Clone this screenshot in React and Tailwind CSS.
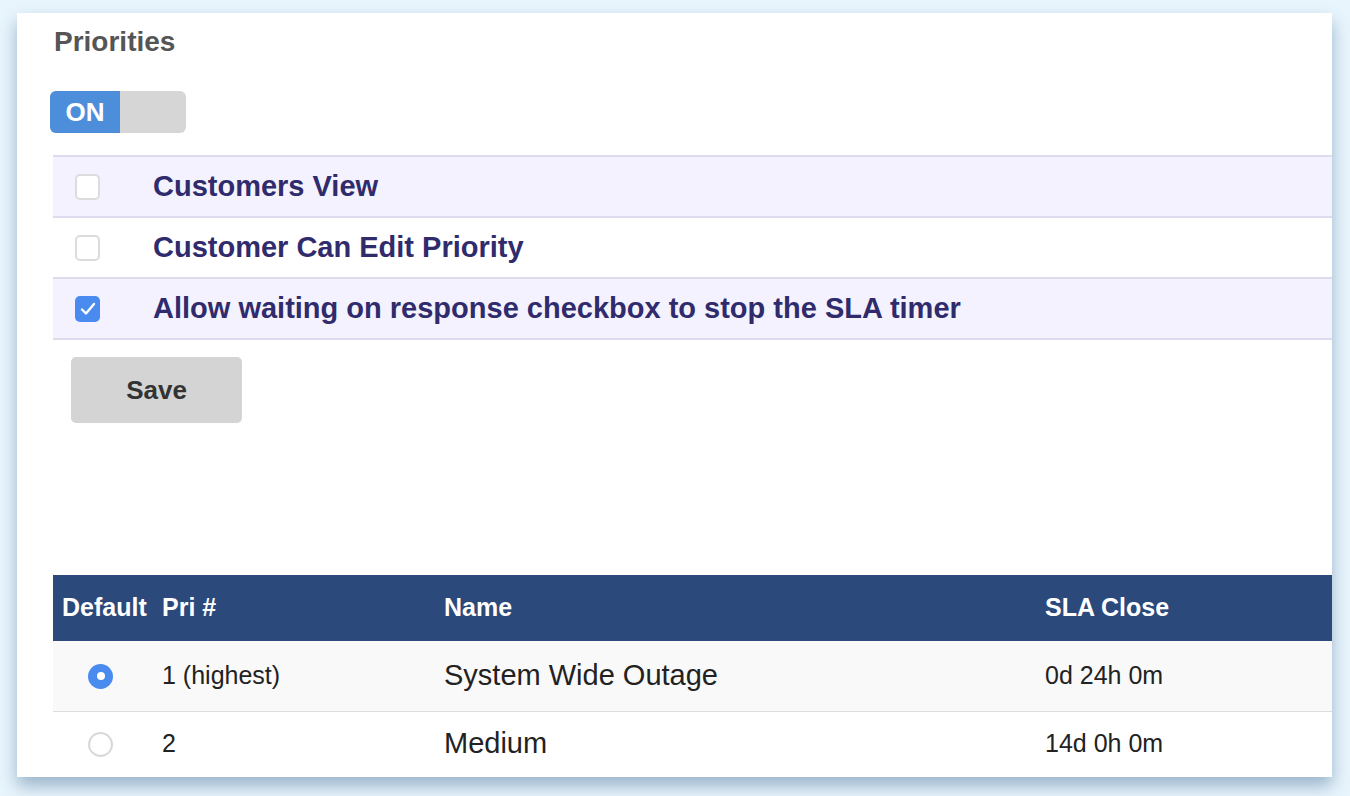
import React, { useState } from 'react';

const options = [
    { label: 'Customers View', checked: false, shaded: true },
    { label: 'Customer Can Edit Priority', checked: false, shaded: false },
    { label: 'Allow waiting on response checkbox to stop the SLA timer', checked: true, shaded: true },
];

const priorities = [
    { pri: '1 (highest)', name: 'System Wide Outage', sla: '0d 24h 0m', isDefault: true },
    { pri: '2', name: 'Medium', sla: '14d 0h 0m', isDefault: false },
];

const Checkbox = ({ checked, onChange }) => (
    <button
        onClick={onChange}
        className={`w-[25px] h-[26px] rounded-[5px] flex items-center justify-center ${
            checked ? 'bg-[#4a8bef]' : 'bg-white border-2 border-[#dcdcdc]'
        }`}
    >
        {checked && (
            <svg width="18" height="16" viewBox="0 0 18 16" fill="none">
                <path d="M3 8.5 L7 12.5 L15 3" stroke="white" strokeWidth="2.4" strokeLinecap="round" strokeLinejoin="round" />
            </svg>
        )}
    </button>
);

const Radio = ({ checked }) =>
    checked ? (
        <div className="w-[25px] h-[25px] rounded-full bg-[#4a8bef] flex items-center justify-center">
            <div className="w-[8px] h-[8px] rounded-full bg-white" />
        </div>
    ) : (
        <div className="w-[25px] h-[25px] rounded-full bg-white border-2 border-[#d8d8d8]" />
    );

const App = () => {
    const [enabled, setEnabled] = useState(true);
    const [checks, setChecks] = useState(options.map((o) => o.checked));

    return (
        <div className="min-h-screen bg-[#e8f5fd] pt-[13px] pl-[17px] pr-[18px] font-['Liberation_Sans',Arial,sans-serif]">
            <div className="bg-white h-[764px] flex flex-col pl-[36px] pt-[15px] shadow-[0_9px_16px_rgba(60,100,140,0.45)]">
                <h1 className="shrink-0 text-[28px] leading-[28px] font-bold text-[#555] ml-[1px]">Priorities</h1>

                {/* on/off switch */}
                <button
                    onClick={() => setEnabled(!enabled)}
                    className="shrink-0 mt-[35px] -ml-[3px] w-[136px] h-[42px] rounded-[6px] bg-[#d6d6d6] flex overflow-hidden"
                >
                    <span className="w-[70px] h-full bg-[#4d8edb] text-white text-[26px] font-bold flex items-center justify-center">
                        {enabled ? 'ON' : 'OFF'}
                    </span>
                </button>

                <div className="shrink-0 mt-[22px] border-b-2 border-[#dddbee]">
                    {options.map((o, i) => (
                        <div
                            key={o.label}
                            className={`h-[61px] border-t-2 border-[#dddbee] flex items-center ${o.shaded ? 'bg-[#f4f2fe]' : 'bg-white'}`}
                        >
                            <div className="w-[100px] pl-[22px] flex items-center">
                                <Checkbox
                                    checked={checks[i]}
                                    onChange={() => setChecks(checks.map((c, j) => (j === i ? !c : c)))}
                                />
                            </div>
                            <span className="text-[29px] font-bold text-[#2f2b6c]">{o.label}</span>
                        </div>
                    ))}
                </div>

                <button className="shrink-0 mt-[17px] ml-[18px] w-[171px] h-[66px] rounded-[5px] bg-[#d4d4d4] text-[26px] font-bold text-[#333]">
                    Save
                </button>

                {/* priorities table */}
                <div className="shrink-0 mt-[152px]">
                    <div className="h-[66px] bg-[#2b4a7b] grid grid-cols-[109px_282px_601px_1fr] items-center text-white text-[25px] font-bold">
                        <div className="pl-[9px]">Default</div>
                        <div>Pri #</div>
                        <div>Name</div>
                        <div>SLA Close</div>
                    </div>
                    {priorities.map((p, i) => (
                        <div
                            key={p.pri}
                            className={`grid grid-cols-[109px_282px_601px_1fr] items-center text-[#222] ${
                                i === 0 ? 'h-[71px] bg-[#f9f9f9] border-b border-[#dddddd]' : 'h-[64px] bg-white'
                            }`}
                        >
                            <div className="pl-[35px]">
                                <Radio checked={p.isDefault} />
                            </div>
                            <div className="text-[25px]">{p.pri}</div>
                            <div className="text-[29px]">{p.name}</div>
                            <div className="text-[25px]">{p.sla}</div>
                        </div>
                    ))}
                </div>
            </div>
        </div>
    );
};

export default App;
